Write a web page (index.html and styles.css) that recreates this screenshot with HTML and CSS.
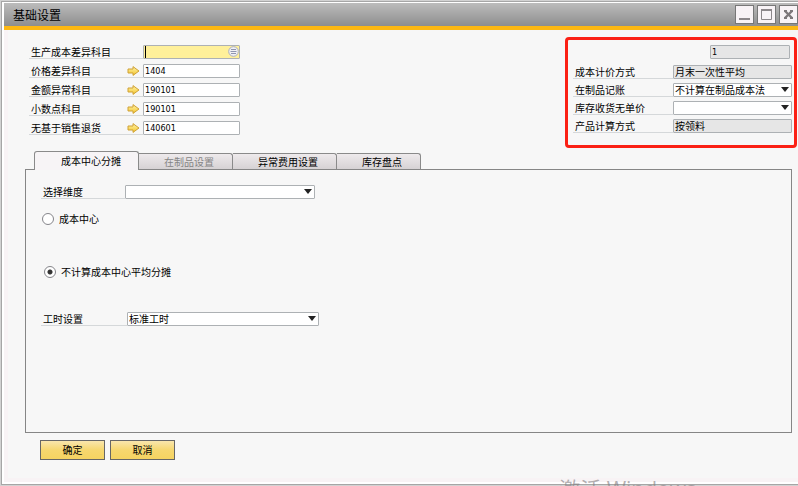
FILE: index.html
```html
<!doctype html>
<html lang="zh-CN">
    <head>
        <meta charset="UTF-8" />
        <meta name="viewport" content="width=device-width, initial-scale=1.0" />
        <title>基础设置</title>
        <link rel="stylesheet" href="styles.css">
    </head>
    <body>
        <svg class="defs" aria-hidden="true">
            <defs>
                <linearGradient id="arrow-fill" x1="0" y1="0" x2="0" y2="1">
                    <stop offset="0" stop-color="#fff3a8" />
                    <stop offset="1" stop-color="#f3c52c" />
                </linearGradient>
                <symbol id="link-arrow" viewBox="0 0 13 10">
                    <path d="M1 3h5V.6L12 5 6 9.400V7H1z" fill="url(#arrow-fill)" stroke="#cfa136" stroke-linejoin="round" />
                </symbol>
            </defs>
        </svg>

        <div class="window">
            <header class="title-bar">
                <h1>基础设置</h1>
                <div class="window-buttons">
                    <button type="button" aria-label="最小化">
                        <svg viewBox="0 0 17 17"><path d="M3 13h11" stroke="#8c878a" stroke-width="2" /></svg>
                    </button>
                    <button type="button" aria-label="最大化">
                        <svg viewBox="0 0 17 17"><path d="M3.500 4v9.500h10V4" fill="none" stroke="#8c878a" /><path d="M3 4h11" stroke="#8c878a" stroke-width="2" /></svg>
                    </button>
                    <button type="button" aria-label="关闭">
                        <svg viewBox="0 0 17 17"><path d="M5 5l7 7M12 5l-7 7" stroke="#7d787b" stroke-width="2.400" /><path d="M4 5h3M10 5h3M4 12h3M10 12h3" stroke="#7d787b" stroke-width="2" /></svg>
                    </button>
                </div>
            </header>

            <form class="content">
                <div class="top">
                    <div class="accounts">
                        <div class="row">
                            <label for="cost-diff">生产成本差异科目</label>
                            <div class="picker">
                                <input type="text" id="cost-diff" class="active">
                                <svg viewBox="0 0 11 11"><circle cx="5.500" cy="5.500" r="4.800" fill="#f1f1f4" stroke="#a9adc0" /><path d="M3 3.500h5M2.500 5.500h6M3 7.500h5" stroke="#8f95b0" /></svg>
                            </div>
                        </div>
                        <div class="row">
                            <label for="price-diff">价格差异科目 <svg class="arrow"><use href="#link-arrow" /></svg></label>
                            <input type="text" id="price-diff" value="1404">
                        </div>
                        <div class="row">
                            <label for="amount-diff">金额异常科目 <svg class="arrow"><use href="#link-arrow" /></svg></label>
                            <input type="text" id="amount-diff" value="190101">
                        </div>
                        <div class="row">
                            <label for="decimal">小数点科目 <svg class="arrow"><use href="#link-arrow" /></svg></label>
                            <input type="text" id="decimal" value="190101">
                        </div>
                        <div class="row">
                            <label for="sales-return">无基于销售退货 <svg class="arrow"><use href="#link-arrow" /></svg></label>
                            <input type="text" id="sales-return" value="140601">
                        </div>
                    </div>

                    <div class="methods">
                        <input type="text" class="code" aria-label="编号" value="1" readonly>
                        <div class="row">
                            <label for="pricing">成本计价方式</label>
                            <input type="text" id="pricing" class="cjk" value="月末一次性平均" readonly>
                        </div>
                        <div class="row">
                            <label for="wip">在制品记账</label>
                            <div class="select">
                                <select id="wip"><option>不计算在制品成本法</option></select>
                            </div>
                        </div>
                        <div class="row">
                            <label for="no-price">库存收货无单价</label>
                            <div class="select">
                                <select id="no-price"><option></option></select>
                            </div>
                        </div>
                        <div class="row">
                            <label for="product">产品计算方式</label>
                            <input type="text" id="product" class="cjk" value="按领料" readonly>
                        </div>
                    </div>
                </div>

                <div class="tabs" role="tablist">
                    <button type="button" role="tab" class="selected" aria-selected="true">成本中心分摊</button>
                    <button type="button" role="tab" disabled>在制品设置</button>
                    <button type="button" role="tab">异常费用设置</button>
                    <button type="button" role="tab">库存盘点</button>
                </div>

                <div class="panel" role="tabpanel">
                    <div class="row">
                        <label for="dimension">选择维度</label>
                        <div class="select">
                            <select id="dimension"><option></option></select>
                        </div>
                    </div>
                    <label class="choice">
                        <input type="radio" name="share">
                        成本中心
                    </label>
                    <label class="choice average">
                        <input type="radio" name="share" checked>
                        不计算成本中心平均分摊
                    </label>
                    <div class="row hours">
                        <label for="hours">工时设置</label>
                        <div class="select">
                            <select id="hours"><option>标准工时</option></select>
                        </div>
                    </div>
                </div>

                <div class="actions">
                    <button type="button">确定</button>
                    <button type="button">取消</button>
                </div>
            </form>
        </div>

        <div class="watermark">激活 Windows</div>
    </body>
</html>
```

FILE: styles.css
```css
* {
    margin: 0;
    padding: 0;
    box-sizing: border-box;
}

body {
    position: relative;
    min-height: 100vh;
    padding: 1px 0 1px 1px;
    background: #d2d2d2;
    color: #000;
    font-family: "Noto Sans CJK SC", sans-serif;
    font-size: 10px;
    line-height: 14px;
    overflow: hidden;
}

input,
select,
button {
    font: inherit;
    color: inherit;
}

.defs {
    position: absolute;
    width: 0;
    height: 0;
}

.window {
    display: flex;
    flex-direction: column;
    min-height: calc(100vh - 2px);
    padding: 1px 0 2px 2px;
    background: #fff;
    border: 1px solid #a6a6a6;
    border-right: 0;
}

/* Title bar */
.title-bar {
    display: flex;
    justify-content: space-between;
    align-items: center;
    height: 27px;
    padding-left: 9px;
    background: linear-gradient(#bcbcbc, #8e8e8e);
    border-bottom: 4px solid #fdb813;
}

.title-bar h1 {
    font-size: 12px;
    font-weight: normal;
}

.window-buttons {
    display: flex;
    gap: 3px;
}

.window-buttons button {
    width: 19px;
    height: 19px;
    background: #f8f3f6;
    border: 1px solid #777;
}

.window-buttons svg {
    display: block;
    width: 17px;
    height: 17px;
}

/* Form */
.content {
    flex: 1;
    display: flex;
    flex-direction: column;
    padding: 7px 1px 18px 17px;
    background: #f7f7f7;
    border: solid #f8f3f5;
    border-width: 0 0 4px 4px;
}

.top {
    display: flex;
    justify-content: space-between;
    align-items: flex-start;
}

.row {
    display: flex;
    height: 14px;
}

.row label {
    display: flex;
    justify-content: space-between;
    align-items: center;
    padding-left: 2px;
    border-bottom: 1px solid #d5d8da;
    white-space: nowrap;
}

.arrow {
    width: 13px;
    height: 10px;
    margin-right: 3px;
}

input[type="text"],
select {
    display: block;
    width: 100%;
    height: 14px;
    padding: 0 1px;
    background: #fff;
    border: 1px solid #adb1b4;
    border-radius: 1px;
    outline: none;
}

input[type="text"] {
    font-family: "DejaVu Sans Condensed", "DejaVu Sans", sans-serif;
    font-size: 9px;
}

input[type="text"].cjk {
    font-family: "Noto Sans CJK SC", sans-serif;
    font-size: 10px;
}

input[readonly] {
    background: #e6e6e6;
}

.accounts {
    display: flex;
    flex-direction: column;
    gap: 5px;
    padding: 8px 0 0 4px;
}

.accounts label {
    width: 114px;
}

.accounts input[type="text"] {
    width: 97px;
}

.picker {
    position: relative;
}

.picker svg {
    position: absolute;
    top: 1px;
    right: 1px;
    width: 11px;
    height: 11px;
}

.accounts input.active {
    background: linear-gradient(#000, #000) 1px 0 / 1px 12px no-repeat, #fff09a;
}

.methods {
    display: flex;
    flex-direction: column;
    gap: 4px;
    width: 232px;
    padding: 5px 2px 12px 5px;
    border: 3px solid #fb2015;
    border-radius: 4px;
}

.methods input.code {
    align-self: flex-end;
    width: 80px;
    margin: 0 2px 2px 0;
}

.methods label {
    width: 100px;
    flex: none;
}

.select {
    position: relative;
    flex: 1;
}

.select select {
    appearance: none;
    line-height: 12px;
}

.select::after {
    content: "";
    position: absolute;
    top: 4px;
    right: 3px;
    border: solid transparent;
    border-width: 5px 4px 0;
    border-top-color: #222;
    pointer-events: none;
}

/* Tabs */
.tabs {
    display: flex;
    align-items: flex-end;
    margin-top: 3px;
    padding-left: 9px;
}

.tabs button {
    height: 16px;
    padding: 0 18px 0 25px;
    background: linear-gradient(#eeeaec, #d6d2d4);
    border: 1px solid #8a8a8a;
    border-width: 1px 1px 0 0;
    border-radius: 0 3px 0 0;
    line-height: 14px;
}

.tabs button:disabled {
    color: #858585;
}

.tabs .selected {
    position: relative;
    height: 19px;
    margin-bottom: -1px;
    padding-left: 26px;
    padding-right: 17px;
    background: #f7f4f6;
    border-left-width: 1px;
    border-radius: 3px 3px 0 0;
}

.panel {
    flex: 1;
    margin-right: 5px;
    padding: 15px;
    border: 1px solid #868686;
}

.panel .row label {
    width: 84px;
}

.panel .select {
    flex: none;
    width: 190px;
}

.panel .hours label {
    width: 86px;
}

.panel .hours .select {
    width: 192px;
}

.choice {
    display: flex;
    align-items: center;
    gap: 5px;
    margin-top: 13px;
    padding-left: 1px;
}

.choice.average {
    margin: 39px 0 33px;
    padding-left: 3px;
}

.choice input {
    appearance: none;
    width: 12px;
    height: 12px;
    background: #fff;
    border: 1px solid #85858a;
    border-radius: 50%;
}

.choice input:checked {
    background: radial-gradient(circle, #333 2px, #fff 3px);
}

.actions {
    display: flex;
    gap: 5px;
    margin-top: 7px;
    padding-left: 15px;
}

.actions button {
    width: 65px;
    height: 20px;
    background: linear-gradient(#f9e6ad, #f6d76f 50%, #f5d361);
    border: 1px solid #666;
}

/* Runs off the bottom edge of the window */
.watermark {
    position: absolute;
    bottom: -15px;
    right: 102px;
    color: rgba(130, 125, 128, 0.6);
    font-family: "Open Sans", "Noto Sans CJK SC", sans-serif;
    font-size: 21px;
    line-height: 24px;
    pointer-events: none;
}
```
